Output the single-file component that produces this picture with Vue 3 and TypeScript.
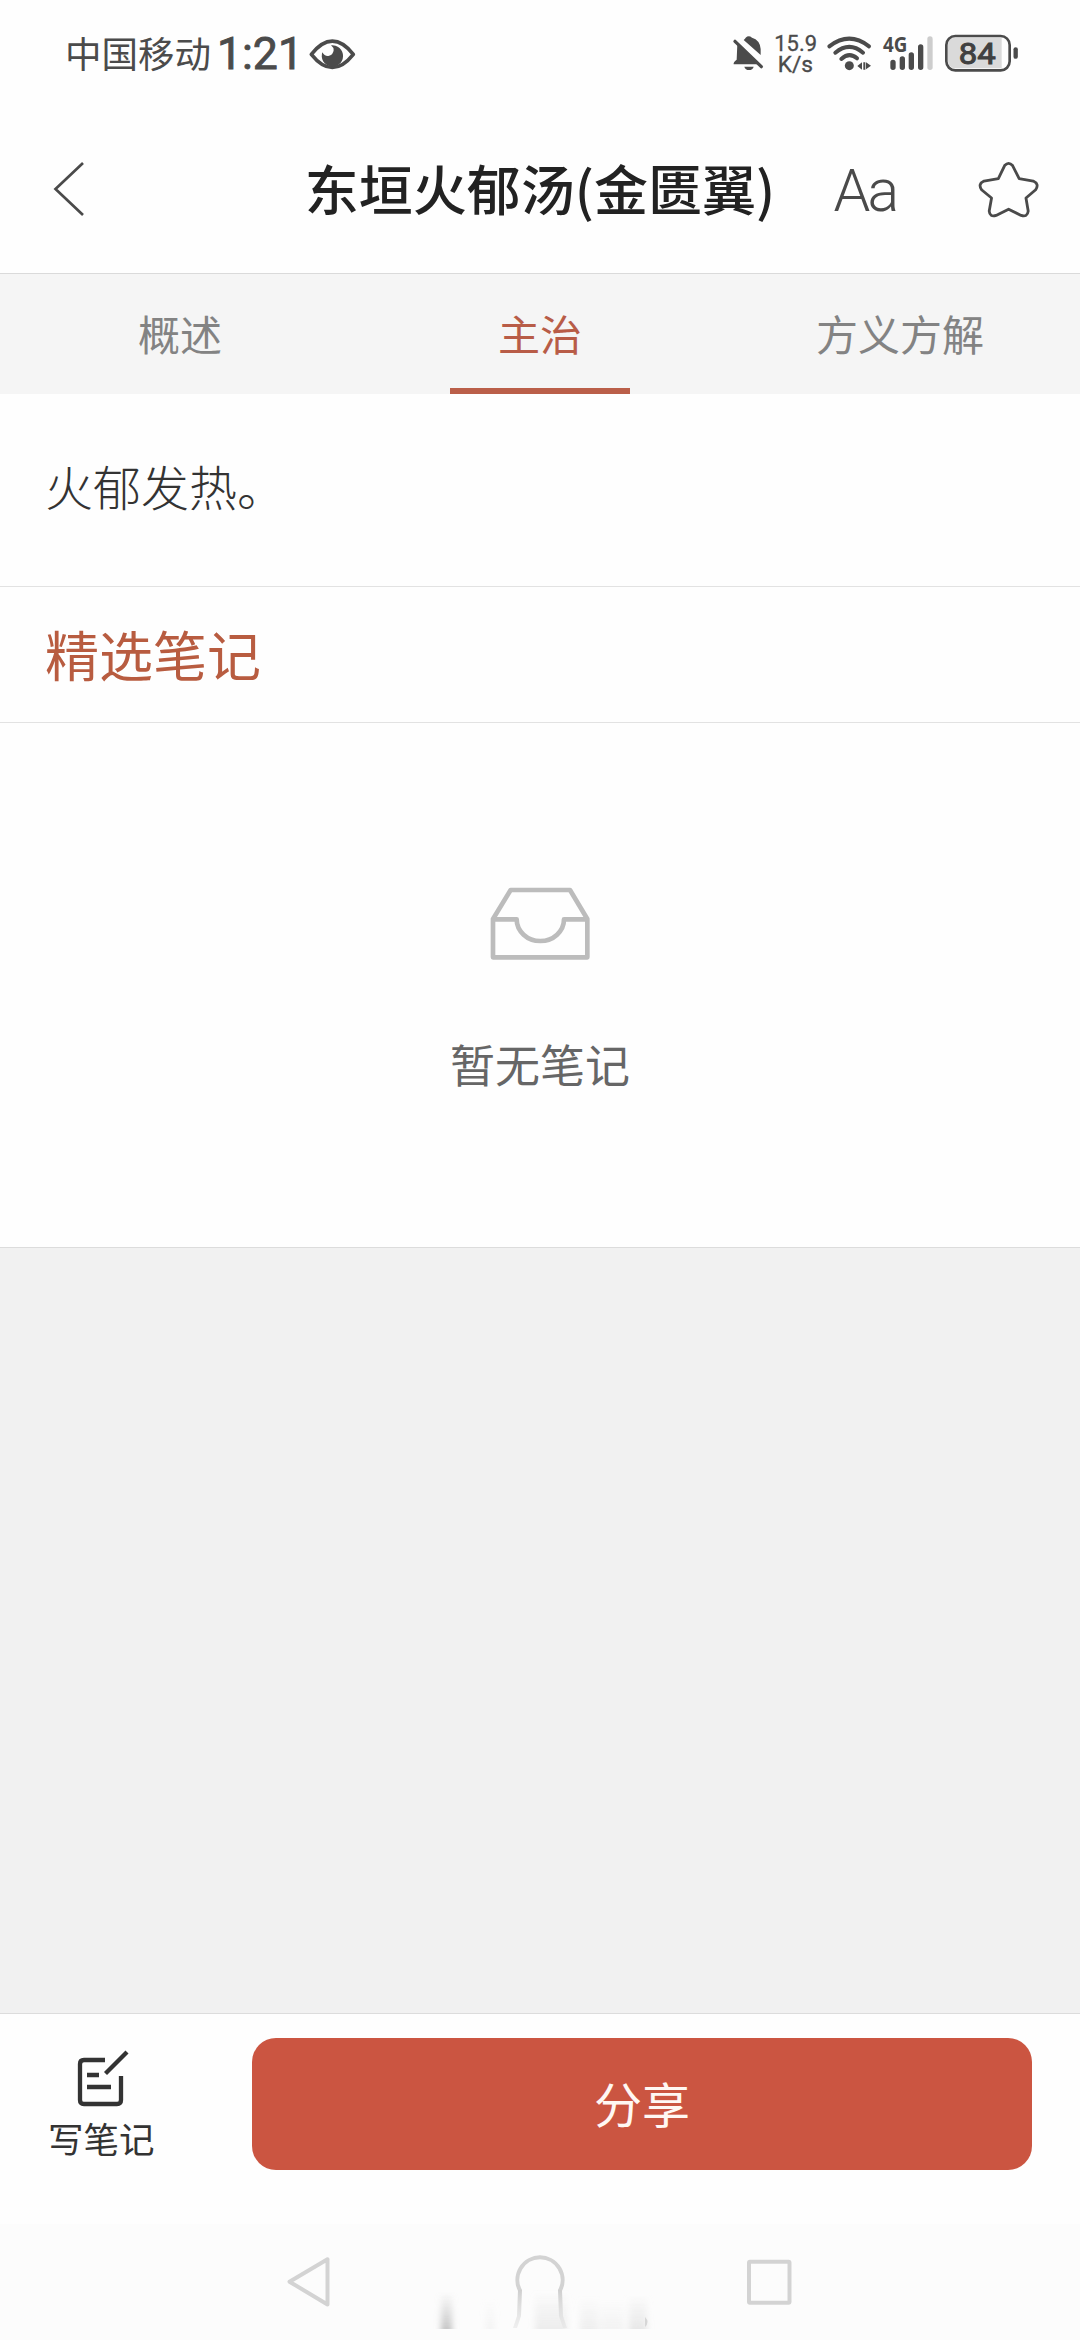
<script setup lang="ts">
import { ref } from 'vue'

const tabs: string[] = ['概述', '主治', '方义方解']
const active = ref<number>(1)
</script>

<template>
  <div class="screen">
    <div class="status">
      <div class="status-left">
        <span class="carrier">中国移动</span>
        <svg class="clock" viewBox="0 0 90 60"><text x="0" y="45.500" textLength="86" lengthAdjust="spacingAndGlyphs">1:21</text></svg>
        <svg class="eye" viewBox="800 70 153 120">
          <path d="M813 131Q876 52 939 131Q876 210 813 131Z" fill="none" stroke="#4b4b4b" stroke-width="11" stroke-linejoin="round" />
          <path d="M872 104A32 32 0 1 1 846 125Q852 137 864 136Q878 134 880 119Q880 110 872 104Z" fill="#4b4b4b" />
        </svg>
      </div>
      <div class="status-right">
        <svg width="36" height="50" viewBox="60 55 108 150" fill="#4b4b4b">
          <path d="M101 91Q106 86 107 84Q116 76 126 84Q150 91 152 118V136Z" />
          <path d="M82 103L142 164H71Q69 158 80 150Z" />
          <path d="M75 95L154 171" stroke="#4b4b4b" stroke-width="10" stroke-linecap="round" />
          <path d="M103 171H131Q128 181 117 181Q106 181 103 171Z" />
        </svg>
        <svg width="59" height="60" viewBox="168 40 177 180" class="speed">
          <text x="193" y="124" textLength="128" lengthAdjust="spacingAndGlyphs">15.9</text>
          <text x="203" y="188" textLength="106" lengthAdjust="spacingAndGlyphs">K/s</text>
        </svg>
        <svg width="50" height="50" viewBox="345 55 150 150">
          <g fill="none" stroke="#4b4b4b" stroke-width="12" stroke-linecap="round">
            <path d="M358 110Q418 64 477 110" />
            <path d="M376 129Q418 94 459 129" />
            <path d="M394 148Q418 126 441 146" />
          </g>
          <circle cx="418" cy="168" r="13.500" fill="#4b4b4b" />
          <path d="M442 169L456 158V180ZM460 158H466V180H460ZM468 158L483 168L468 179Z" fill="#4b4b4b" />
        </svg>
        <svg width="65" height="50" viewBox="495 55 195 150" class="signal">
          <text x="519" y="128" textLength="73" lengthAdjust="spacingAndGlyphs">4G</text>
          <g stroke="#4b4b4b" stroke-width="16" stroke-linecap="round">
            <path d="M549 158V173M577 148V173M604 136V173M632 112V173" />
            <path d="M660 88V173" stroke="#cdcdcd" />
          </g>
        </svg>
        <svg width="80" height="50" viewBox="690 55 240 150" class="battery">
          <path d="M736 84H875V176H736Q714 176 714 154V106Q714 84 736 84Z" fill="#dadada" />
          <rect x="709" y="79" width="190" height="103" rx="27" fill="none" stroke="#4b4b4b" stroke-width="8" />
          <path d="M917 119V141" stroke="#4b4b4b" stroke-width="13" stroke-linecap="round" />
          <text x="746" y="163" textLength="111" lengthAdjust="spacingAndGlyphs">84</text>
        </svg>
      </div>
    </div>

    <header class="header">
      <svg class="back" viewBox="0 0 60 60"><path d="M43 4L15.500 30L43 56" fill="none" stroke="#4a4a4a" stroke-width="2.700" /></svg>
      <h1>东垣火郁汤(金匮翼)</h1>
      <div class="actions">
        <svg class="aa" width="76" height="60" viewBox="0 0 76 60"><text x="3.500" y="51">Aa</text></svg>
        <svg width="64" height="60" viewBox="975 159.500 66 61.500">
          <path d="M1003.500 165Q1007.600 160.500 1011.700 165L1018.500 178.500L1033 181Q1039.500 184 1035.500 190L1025.500 198.500L1027.800 212Q1027 218.500 1020.500 216.500L1007.600 210L994.700 216.500Q988.200 218.500 987.600 212L990 198.500L979.700 190Q975.700 184 982.200 181L997 178.500Z" fill="none" stroke="#4a4a4a" stroke-width="2.900" stroke-linejoin="round" />
        </svg>
      </div>
    </header>

    <nav class="tabs">
      <button v-for="(tab, i) in tabs" :key="tab" :class="{ active: i === active }" @click="active = i">
        <span>{{ tab }}</span>
      </button>
    </nav>

    <section class="content">火郁发热。</section>
    <h2>精选笔记</h2>
    <section class="empty">
      <svg width="100" height="73" viewBox="208 82 300 219" fill="none" stroke="#bcbcbc" stroke-width="14" stroke-linejoin="round">
        <path d="M217 293V178L270 91H448L500 178V293Z" />
        <path d="M217 179H288A71 65 0 0 0 430 179H500" />
      </svg>
      <p>暂无笔记</p>
    </section>
    <div class="filler"></div>

    <footer class="bottom">
      <div class="write">
        <svg width="56" height="60" viewBox="74 2048 56 60" fill="none" stroke="#333" stroke-width="4.300">
          <path d="M105 2060H84Q80 2060 80 2064V2100Q80 2104 84 2104H117Q121 2104 121 2100V2076" />
          <path d="M105.500 2073.500L127 2052M87 2075H99M87 2087H111" />
        </svg>
        <span>写笔记</span>
      </div>
      <button class="share">分享</button>
    </footer>

    <div class="sysnav">
      <svg width="1080" height="116" viewBox="0 2224 1080 116">
        <defs>
          <linearGradient id="leg" x1="0" y1="0" x2="0" y2="1">
            <stop offset="0" stop-color="#cfcfcf" />
            <stop offset="1" stop-color="#e2e2e2" stop-opacity=".5" />
          </linearGradient>
          <linearGradient id="shade" x1="0" y1="0" x2="0" y2="1">
            <stop offset="0" stop-color="#dedede" stop-opacity="0" />
            <stop offset="1" stop-color="#dedede" stop-opacity=".8" />
          </linearGradient>
          <linearGradient id="dark" x1="0" y1="0" x2="0" y2="1">
            <stop offset="0" stop-color="#c0c0c0" stop-opacity="0" />
            <stop offset="1" stop-color="#b8b8b8" stop-opacity=".9" />
          </linearGradient>
          <filter id="soft" x="-1" y="-.1" width="3" height="1.200"><feGaussianBlur stdDeviation="3 0" /></filter>
          <clipPath id="strip"><rect x="430" y="2289" width="230" height="40" /></clipPath>
        </defs>
        <g clip-path="url(#strip)" filter="url(#soft)">
          <rect x="441" y="2292" width="11" height="40" fill="url(#dark)" />
          <rect x="486" y="2298" width="8" height="34" fill="url(#shade)" opacity=".4" />
          <rect x="535" y="2290" width="32" height="42" fill="url(#shade)" opacity=".7" />
          <rect x="580" y="2296" width="18" height="36" fill="url(#shade)" opacity=".6" />
          <rect x="600" y="2298" width="24" height="34" fill="url(#shade)" opacity=".4" />
          <rect x="629" y="2294" width="18" height="38" fill="url(#shade)" opacity=".9" />
        </g>
        <g fill="none" stroke="#d3d3d3" stroke-width="4" stroke-linejoin="round">
          <path d="M289.500 2281.700L327.500 2259.300V2304.500Z" />
          <path d="M520.300 2291A22.600 22.600 0 1 1 559.700 2291" />
          <rect x="749" y="2261.700" width="40.500" height="41" rx="1" />
        </g>
        <path d="M518 2290H522L521 2316L517 2328H513L517 2316ZM558 2290H562L563 2316L567 2328H563L559 2316Z" fill="url(#leg)" />
        <path d="M645 2317Q650 2322 645 2327Z" fill="#d6d6d6" />
      </svg>
    </div>
  </div>
</template>

<style>
body { margin: 0; background: #fff; }
</style>

<style scoped>
.screen {
  width: 1080px;
  height: 2340px;
  display: flex;
  flex-direction: column;
  overflow: hidden;
  background: #fefefe;
  font-family: "Noto Sans CJK SC", sans-serif;
}
.screen > * { flex-shrink: 0; box-sizing: border-box; }
svg { display: block; overflow: visible; }
button { border: 0; padding: 0; margin: 0; font: inherit; }
.status {
  height: 106px;
  padding: 0 60px 0 65px;
  display: flex;
  justify-content: space-between;
  align-items: center;
}
.status-left, .status-right { display: flex; align-items: center; }
.carrier { font-size: 36.500px; line-height: 50px; color: #4b4b4b; }
.clock { width: 90px; height: 60px; margin-left: 6px; }
.clock text { font: 400 44px Roboto, sans-serif; fill: #4b4b4b; stroke: #4b4b4b; stroke-width: .9px; }
.eye { width: 51px; height: 40px; margin: 2px 0 0 0; }
.speed text { font: 400 65px Roboto, sans-serif; fill: #4b4b4b; stroke: #4b4b4b; stroke-width: 1px; }
.signal text { font: 700 62px "Noto Sans", sans-serif; fill: #4b4b4b; }
.battery text { font: 400 91px Roboto, sans-serif; fill: #404040; stroke: #404040; stroke-width: 3px; }
.header {
  height: 168px;
  border-bottom: 1px solid #dadada;
  display: grid;
  grid-template-columns: 300px 480px 300px;
  align-items: center;
}
.back { width: 60px; height: 60px; margin-left: 40px; margin-bottom: 1px; }
h1 {
  margin: 0 0 4px;
  text-align: center;
  font-size: 54px;
  line-height: 80px;
  font-weight: 500;
  color: #222;
  white-space: nowrap;
}
.actions { display: flex; justify-content: space-between; padding: 0 39px 0 50px; }
.aa text { font: 300 59px Roboto, sans-serif; letter-spacing: -3px; fill: #4a4a4a; }
.tabs {
  height: 120px;
  background: #f5f5f5;
  display: flex;
}
.tabs button {
  flex: 1;
  display: flex;
  justify-content: center;
  background: none;
  font-size: 42px;
  line-height: 118px;
  color: #838383;
}
.tabs .active { color: #b85c47; }
.tabs .active span {
  width: 180px;
  height: 114px;
  border-bottom: 6px solid #ba5f49;
}
.content {
  height: 193px;
  padding: 55px 45px 0;
  font-size: 48px;
  line-height: 72px;
  font-weight: 300;
  color: #333;
  border-bottom: 1px solid #e2e2e2;
}
h2 {
  height: 136px;
  margin: 0;
  padding: 0 45px;
  font-size: 54px;
  line-height: 133px;
  font-weight: 400;
  color: #b85c40;
  border-bottom: 1px solid #e2e2e2;
}
.empty {
  height: 524px;
  padding-top: 164px;
  display: flex;
  flex-direction: column;
  align-items: center;
}
.empty p {
  margin: 69px 0 0;
  font-size: 45px;
  line-height: 70px;
  color: #666;
}
.filler {
  flex: 1 0 0;
  background: #f1f1f1;
  border-top: 1px solid #dcdcdc;
  border-bottom: 1px solid #dcdcdc;
}
.bottom {
  height: 210px;
  padding: 24px 48px 0 0;
  display: flex;
}
.write {
  width: 252px;
  padding: 10px 48px 0;
  box-sizing: border-box;
  display: flex;
  flex-direction: column;
  align-items: flex-start;
  font-size: 35.500px;
  line-height: 50px;
  color: #333;
}
.write svg { margin-left: 26px; }
.write span { margin-top: 5px; }
.share {
  flex: 1;
  height: 132px;
  border-radius: 24px;
  background: #cb5541;
  color: #fff7f3;
  font-size: 48px;
  line-height: 128px;
  padding-bottom: 5px;
  box-sizing: border-box;
}
.sysnav { height: 116px; background: #fcfcfc; }
</style>
